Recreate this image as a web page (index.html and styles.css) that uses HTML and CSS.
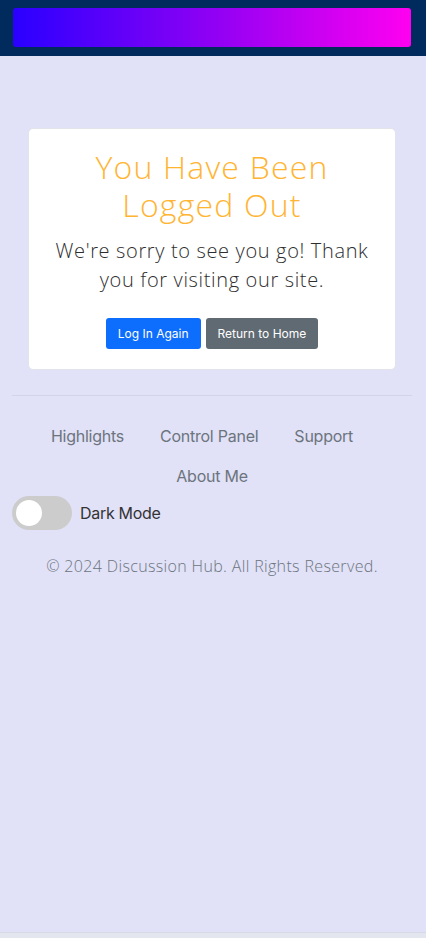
FILE: index.html
```html
<!DOCTYPE html>
<html lang="en">
<head>
<meta charset="utf-8">
<title>Logged Out</title>
<link rel="stylesheet" href="styles.css">
</head>
<body>
<div class="page">
  <header class="topbar">
    <div class="gradient-bar"></div>
  </header>
  <main class="main">
    <section class="card">
      <h1 class="title">You Have Been Logged Out</h1>
      <p class="lead">We're sorry to see you go! Thank you for visiting our site.</p>
      <div class="actions">
        <a class="btn btn-primary" href="#">Log In Again</a>
        <a class="btn btn-secondary" href="#">Return to Home</a>
      </div>
    </section>
  </main>
  <footer class="footer">
    <hr class="rule">
    <nav class="links">
      <a href="#">Highlights</a>
      <a href="#">Control Panel</a>
      <a href="#" class="row-end">Support</a>
      <a href="#">About Me</a>
    </nav>
    <label class="toggle-row">
      <span class="switch"><span class="knob"></span></span>
      <span class="toggle-label">Dark Mode</span>
    </label>
    <p class="copy">© 2024 Discussion Hub. All Rights Reserved.</p>
  </footer>
</div>
<div class="bottom-strip"></div>
</body>
</html>
```

FILE: styles.css
```css
* { box-sizing: border-box; }
html, body { margin: 0; padding: 0; }
body {
  background: #e3e5ef;
  font-family: Inter, "Liberation Sans", sans-serif;
}
.page {
  background: #e1e1f7;
  min-height: 933px;
  border-bottom: 1px solid #d8d8e6;
}
.topbar {
  background: #002b5c;
  height: 56px;
  padding: 8px 15px 9px 13px;
}
.gradient-bar {
  height: 39px;
  border-radius: 3px;
  background: linear-gradient(90deg, #2a00ff 0%, #8f00f4 50%, #ff00f0 100%);
}
.main {
  padding: 72px 30px 0 28px;
}
.card {
  background: #fff;
  border: 1px solid #e3e3ea;
  border-radius: 5px;
  padding: 19px 12px 20px;
  text-align: center;
}
.title {
  margin: 0;
  font-family: "Open Sans", sans-serif;
  font-weight: 300;
  font-size: 32px;
  line-height: 38px;
  letter-spacing: 1.2px;
  color: #ffb432;
  padding: 0 46px;
}
.lead {
  margin: 12px 0 0;
  font-family: "Open Sans", sans-serif;
  font-weight: 300;
  font-size: 20px;
  line-height: 29px;
  letter-spacing: 0.65px;
  color: #2e2e2e;
  padding: 0 10px;
}
.actions {
  display: flex;
  justify-content: center;
  gap: 5px;
  margin-top: 24px;
}
.btn {
  display: inline-block;
  font-family: Inter, "Liberation Sans", sans-serif;
  font-size: 12px;
  line-height: 19px;
  padding: 6px 12px;
  color: #fff;
  text-decoration: none;
  border-radius: 3px;
}
.btn-primary { background: #0d6efd; }
.btn-secondary { background: #606a72; }
.footer {
  padding: 25px 14px 0 12px;
}
.rule {
  margin: 0;
  border: 0;
  border-top: 1px solid #d4d4e8;
}
.links {
  display: flex;
  flex-wrap: wrap;
  justify-content: center;
  padding: 20px 0 0;
}
.links a {
  font-size: 16px;
  line-height: 24px;
  letter-spacing: -0.25px;
  padding: 8px 18px;
  color: #6c757d;
  text-decoration: none;
}
.links a.row-end { margin-right: 20px; }
.toggle-row {
  display: flex;
  align-items: center;
  gap: 8px;
}
.switch {
  width: 60px;
  height: 34px;
  border-radius: 17px;
  background: #cccccc;
  padding: 4px;
  display: flex;
  align-items: center;
}
.knob {
  width: 26px;
  height: 26px;
  border-radius: 50%;
  background: #fff;
}
.toggle-label {
  font-size: 16px;
  letter-spacing: -0.3px;
  color: #333;
}
.copy {
  margin: 25px 0 0;
  text-align: center;
  font-family: "Open Sans", sans-serif;
  font-weight: 300;
  font-size: 16px;
  letter-spacing: 0.35px;
  color: #6c757d;
}
.bottom-strip { height: 5px; }
```
